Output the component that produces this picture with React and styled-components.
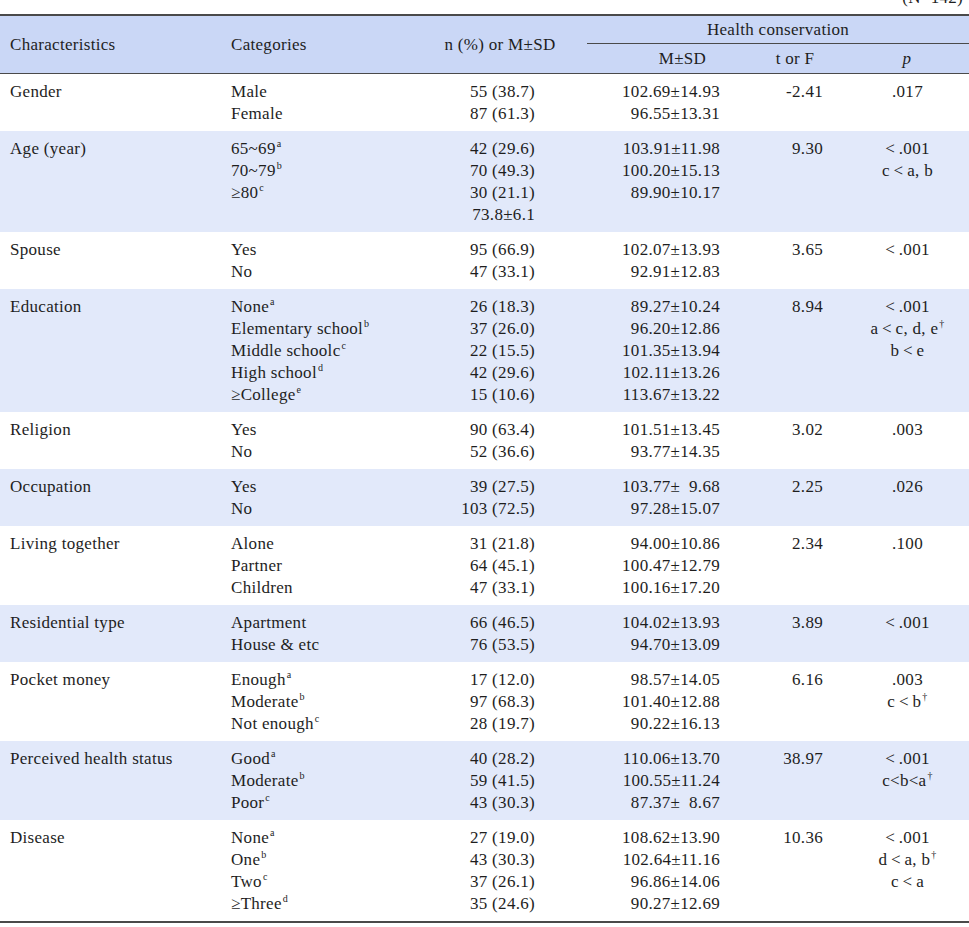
import React from 'react';
import styled, { createGlobalStyle } from 'styled-components';

const GlobalStyle = createGlobalStyle`
  body {
    margin: 0;
    background: #fff;
    font-family: 'Liberation Serif', 'Times New Roman', serif;
    color: #1e1e1e;
  }
`;

const Page = styled.div`
  width: 969px;
  font-size: 17px;
  letter-spacing: 0.3px;
`;

const Note = styled.div`
  height: 14px;
  overflow: hidden;
  text-align: right;
  padding-right: 6px;
  span {
    display: inline-block;
    line-height: 16px;
    transform: translateY(-12px);
  }
`;

const Table = styled.table`
  width: 969px;
  border-collapse: collapse;
  table-layout: fixed;
  border-top: 2px solid #4a4a4a;
  border-bottom: 2px solid #4a4a4a;
`;

const Col = styled.col`
  width: ${p => p.$w}px;
`;

const HeadRow = styled.tr`
  background: #cad7f6;
`;

const Th = styled.th`
  font-weight: normal;
  text-align: ${p => p.$align || 'center'};
  padding: 0 ${p => p.$pr || 0}px 0 ${p => p.$pl || 0}px;
  height: ${p => p.$h || 27}px;
  vertical-align: middle;
  border-bottom: ${p => (p.$line ? '1.5px solid #4a4a4a' : 'none')};
  font-style: ${p => (p.$italic ? 'italic' : 'normal')};
`;

const HeadBottom = styled.tr`
  background: #cad7f6;
  border-bottom: 1.5px solid #4a4a4a;
`;

const Row = styled.tr`
  background: ${p => (p.$shade ? '#e2e9fa' : '#fff')};
`;

const Td = styled.td`
  vertical-align: top;
  padding: 7px ${p => p.$pr || 0}px 6px ${p => p.$pl || 0}px;
  text-align: ${p => p.$align || 'left'};
`;

const Line = styled.div`
  line-height: 22px;
  height: 22px;
  white-space: pre;
`;

const Sup = styled.sup`
  font-size: 10px;
  line-height: 0;
  vertical-align: 7px;
  margin-left: 1px;
`;

const rows = [
  {
    c: 'Gender',
    cats: [['Male'], ['Female']],
    n: ['55 (38.7)', '87 (61.3)'],
    m: ['102.69±14.93', '96.55±13.31'],
    t: '-2.41',
    p: [['.017']],
  },
  {
    c: 'Age (year)',
    cats: [['65~69', 'a'], ['70~79', 'b'], ['≥80', 'c'], ['']],
    n: ['42 (29.6)', '70 (49.3)', '30 (21.1)', '73.8±6.1'],
    m: ['103.91±11.98', '100.20±15.13', '89.90±10.17'],
    t: '9.30',
    p: [['<\u2009.001'], ['c\u2009<\u2009a, b']],
  },
  {
    c: 'Spouse',
    cats: [['Yes'], ['No']],
    n: ['95 (66.9)', '47 (33.1)'],
    m: ['102.07±13.93', '92.91±12.83'],
    t: '3.65',
    p: [['<\u2009.001']],
  },
  {
    c: 'Education',
    cats: [['None', 'a'], ['Elementary school', 'b'], ['Middle schoolc', 'c'], ['High school', 'd'], ['≥College', 'e']],
    n: ['26 (18.3)', '37 (26.0)', '22 (15.5)', '42 (29.6)', '15 (10.6)'],
    m: ['89.27±10.24', '96.20±12.86', '101.35±13.94', '102.11±13.26', '113.67±13.22'],
    t: '8.94',
    p: [['<\u2009.001'], ['a\u2009<\u2009c, d, e', '†'], ['b\u2009<\u2009e']],
  },
  {
    c: 'Religion',
    cats: [['Yes'], ['No']],
    n: ['90 (63.4)', '52 (36.6)'],
    m: ['101.51±13.45', '93.77±14.35'],
    t: '3.02',
    p: [['.003']],
  },
  {
    c: 'Occupation',
    cats: [['Yes'], ['No']],
    n: ['39 (27.5)', '103 (72.5)'],
    m: ['103.77±\u20079.68', '97.28±15.07'],
    t: '2.25',
    p: [['.026']],
  },
  {
    c: 'Living together',
    cats: [['Alone'], ['Partner'], ['Children']],
    n: ['31 (21.8)', '64 (45.1)', '47 (33.1)'],
    m: ['94.00±10.86', '100.47±12.79', '100.16±17.20'],
    t: '2.34',
    p: [['.100']],
  },
  {
    c: 'Residential type',
    cats: [['Apartment'], ['House & etc']],
    n: ['66 (46.5)', '76 (53.5)'],
    m: ['104.02±13.93', '94.70±13.09'],
    t: '3.89',
    p: [['<\u2009.001']],
  },
  {
    c: 'Pocket money',
    cats: [['Enough', 'a'], ['Moderate', 'b'], ['Not enough', 'c']],
    n: ['17 (12.0)', '97 (68.3)', '28 (19.7)'],
    m: ['98.57±14.05', '101.40±12.88', '90.22±16.13'],
    t: '6.16',
    p: [['.003'], ['c\u2009<\u2009b', '†']],
  },
  {
    c: 'Perceived health status',
    cats: [['Good', 'a'], ['Moderate', 'b'], ['Poor', 'c']],
    n: ['40 (28.2)', '59 (41.5)', '43 (30.3)'],
    m: ['110.06±13.70', '100.55±11.24', '87.37±\u20078.67'],
    t: '38.97',
    p: [['<\u2009.001'], ['c<b<a', '†']],
  },
  {
    c: 'Disease',
    cats: [['None', 'a'], ['One', 'b'], ['Two', 'c'], ['≥Three', 'd']],
    n: ['27 (19.0)', '43 (30.3)', '37 (26.1)', '35 (24.6)'],
    m: ['108.62±13.90', '102.64±11.16', '96.86±14.06', '90.27±12.69'],
    t: '10.36',
    p: [['<\u2009.001'], ['d\u2009<\u2009a, b', '†'], ['c\u2009<\u2009a']],
  },
];

const Marked = ({ item }) => (
  <Line>
    {item[0]}
    {item[1] && <Sup>{item[1]}</Sup>}
  </Line>
);

const App = () => (
  <Page>
    <GlobalStyle />
    <Note>
      <span>(N=142)</span>
    </Note>
    <Table>
      <colgroup>
        <Col $w={221} />
        <Col $w={179} />
        <Col $w={187} />
        <Col $w={173} />
        <Col $w={90} />
        <Col $w={119} />
      </colgroup>
      <thead>
        <HeadRow>
          <Th rowSpan={2} $align="left" $pl={10}>Characteristics</Th>
          <Th rowSpan={2} $align="left" $pl={10}>Categories</Th>
          <Th rowSpan={2} $pl={13}>n (%) or M±SD</Th>
          <Th colSpan={3} $line>Health conservation</Th>
        </HeadRow>
        <HeadBottom>
          <Th $h={29} $pl={18}>M±SD</Th>
          <Th $h={29} $pr={20}>t or F</Th>
          <Th $h={29} $pr={5} $italic>p</Th>
        </HeadBottom>
      </thead>
      <tbody>
        {rows.map((r, i) => (
          <Row key={r.c} $shade={i % 2 === 1}>
            <Td $pl={10}>
              <Line>{r.c}</Line>
            </Td>
            <Td $pl={10}>
              {r.cats.map((c, j) => (
                <Marked key={j} item={c} />
              ))}
            </Td>
            <Td $align="right" $pr={52}>
              {r.n.map((v, j) => (
                <Line key={j}>{v}</Line>
              ))}
            </Td>
            <Td $align="right" $pr={40}>
              {r.m.map((v, j) => (
                <Line key={j}>{v}</Line>
              ))}
            </Td>
            <Td $align="right" $pr={27}>
              <Line>{r.t}</Line>
            </Td>
            <Td $align="center" $pr={4}>
              {r.p.map((v, j) => (
                <Marked key={j} item={v} />
              ))}
            </Td>
          </Row>
        ))}
      </tbody>
    </Table>
  </Page>
);

export default App;
